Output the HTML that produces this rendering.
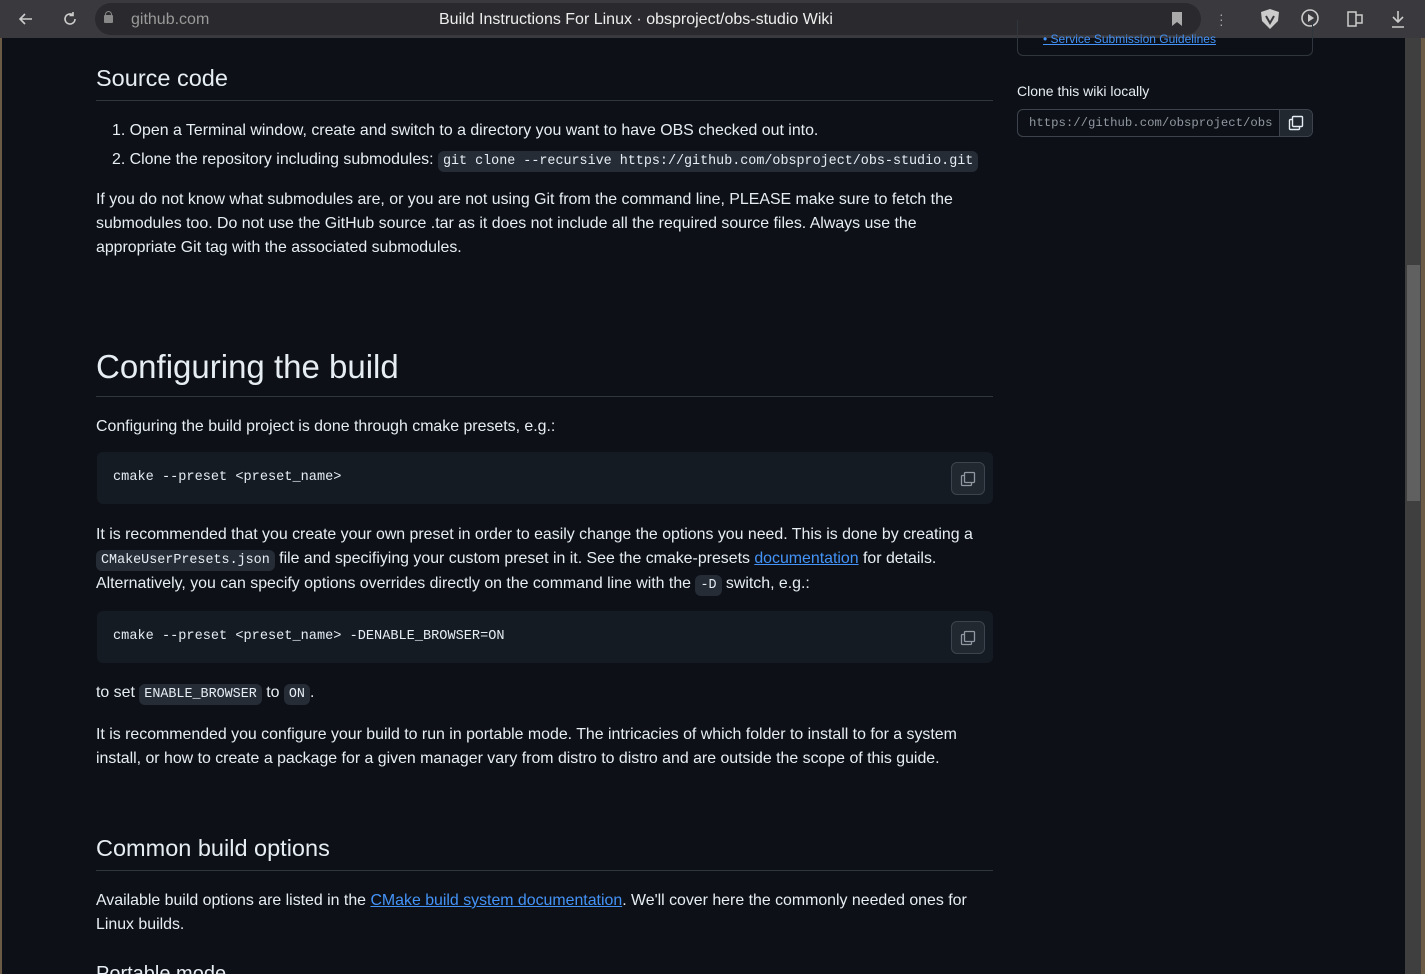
<!DOCTYPE html>
<html><head><meta charset="utf-8"><style>
*{margin:0;padding:0;box-sizing:border-box}
html,body{width:1425px;height:974px;overflow:hidden}
body{background:#0d1117;color:#e6edf3;font-family:"Liberation Sans",sans-serif;position:relative}
.t{position:absolute;left:96px;font-size:15.9px;line-height:24px;white-space:nowrap}
code{font-family:"Liberation Mono",monospace;font-size:13.4px;background:#262c36;padding:3px 5px;border-radius:6px}
a{color:#4493f8;text-decoration:underline}
.h{position:absolute;left:96px;width:897px;border-bottom:1px solid #30363d;font-weight:normal;white-space:nowrap}
.pre{position:absolute;left:97px;width:896px;height:52px;background:#151b23;border-radius:6px;font-family:"Liberation Mono",monospace;font-size:13.6px;line-height:52px;padding-left:16px;white-space:nowrap}
.cp{position:absolute;right:8px;top:10px;width:34px;height:33px;border:1px solid #3d444d;border-radius:6px;background:#212830}
.cp svg{position:absolute;left:8px;top:8px}
</style></head><body>
<div style="position:absolute;left:0;top:0;width:1425px;height:38px;background:#3a3a3e"></div>
<div style="position:absolute;left:95px;top:3px;width:1106px;height:32px;border-radius:16px;background:#2a2a2e"></div>
<svg style="position:absolute;left:17px;top:10px" width="18" height="18" viewBox="0 0 18 18"><path d="M15 9H3M8 4L3 9l5 5" stroke="#ccc" stroke-width="1.6" fill="none"/></svg>
<svg style="position:absolute;left:61px;top:10px" width="18" height="18" viewBox="0 0 18 18"><path d="M14 9a5 5 0 1 1-2-4M12 2v3.5H8.5" stroke="#ccc" stroke-width="1.6" fill="none"/></svg>
<div style="position:absolute;left:104px;top:15px;width:9px;height:8px;background:#888;border-radius:1px"></div>
<div style="position:absolute;left:105px;top:11px;width:7px;height:7px;border:1.5px solid #888;border-radius:4px 4px 0 0"></div>
<div style="position:absolute;left:131px;top:11px;font-size:16px;color:#9a9a9a">github.com</div>
<div style="position:absolute;left:439px;top:11px;font-size:16px;color:#eee">Build Instructions For Linux · obsproject/obs-studio Wiki</div>
<svg style="position:absolute;left:1171px;top:11px" width="12" height="16"><path d="M1 1h10v14l-5-4-5 4z" fill="#aaa"/></svg>
<div style="position:absolute;left:1219px;top:12px;color:#aaa;font-size:14px;line-height:5px">·<br>·<br>·</div>
<svg style="position:absolute;left:1259px;top:8px" width="22" height="22"><path d="M11 1l9 3-1 9-8 8-8-8-1-9z" fill="#ccc"/><path d="M7 8l4 7 4-7" stroke="#3a3a3e" stroke-width="2" fill="none"/></svg>
<svg style="position:absolute;left:1300px;top:8px" width="22" height="22"><circle cx="10" cy="10" r="8" stroke="#ccc" stroke-width="1.6" fill="none"/><path d="M8 6l6 4-6 4z" fill="#ccc"/></svg>
<svg style="position:absolute;left:1345px;top:9px" width="20" height="20"><path d="M3 3h8v14H3zM11 6h6v8h-6" stroke="#ccc" stroke-width="1.5" fill="none"/></svg>
<svg style="position:absolute;left:1389px;top:9px" width="18" height="20"><path d="M9 2v11M4 8l5 5 5-5M3 18h12" stroke="#ccc" stroke-width="1.6" fill="none"/></svg>
<div style="position:absolute;left:1405px;top:38px;width:16px;height:936px;background:#3f3f3f"></div>
<div style="position:absolute;left:1407px;top:265px;width:13px;height:236px;background:#606060"></div>
<div style="position:absolute;left:1421px;top:38px;width:4px;height:936px;background:#6b5a45"></div>
<div style="position:absolute;left:0;top:38px;width:2px;height:936px;background:#6b5a45"></div>
<div style="position:absolute;left:1017px;top:20px;width:296px;height:36px;border:1px solid #30363d;border-top:none;border-radius:0 0 6px 6px"></div>
<div style="position:absolute;left:1043px;top:32px;font-size:12px;color:#4493f8;text-decoration:underline">• Service Submission Guidelines</div>
<div style="position:absolute;left:1017px;top:83px;font-size:14px">Clone this wiki locally</div>
<div style="position:absolute;left:1017px;top:109px;width:296px;height:28px;border:1px solid #3d444d;border-radius:6px;background:#0d1117;overflow:hidden">
<div style="position:absolute;left:11px;top:6px;font-family:'Liberation Mono',monospace;font-size:12.3px;color:#9198a1">https://github.com/obsproject/obs</div>
<div style="position:absolute;right:0;top:0;width:33px;height:26px;background:#212830;border-left:1px solid #3d444d"><svg style="position:absolute;left:8px;top:5px" width="16" height="16" viewBox="0 0 16 16"><path d="M5.5 1.5h8a1 1 0 0 1 1 1v8a1 1 0 0 1-1 1h-8a1 1 0 0 1-1-1v-8a1 1 0 0 1 1-1zM4.5 4.5h-2a1 1 0 0 0-1 1v8a1 1 0 0 0 1 1h8a1 1 0 0 0 1-1v-2" stroke="#e6edf3" stroke-width="1.4" fill="none"/></svg></div></div>
<div class="h" style="top:65px;height:36px;font-size:23.5px">Source code</div>
<div class="t" style="top:119px;left:112px">1. Open a Terminal window, create and switch to a directory you want to have OBS checked out into.</div>
<div class="t" style="top:148px;left:112px">2. Clone the repository including submodules: <code>git clone --recursive https://github.com/obsproject/obs-studio.git</code></div>
<div class="t" style="top:188px">If you do not know what submodules are, or you are not using Git from the command line, PLEASE make sure to fetch the</div>
<div class="t" style="top:212px">submodules too. Do not use the GitHub source .tar as it does not include all the required source files. Always use the</div>
<div class="t" style="top:236px">appropriate Git tag with the associated submodules.</div>
<div class="h" style="top:348px;height:49px;font-size:33px">Configuring the build</div>
<div class="t" style="top:415px">Configuring the build project is done through cmake presets, e.g.:</div>
<div class="pre" style="top:452px">cmake --preset &lt;preset_name&gt;<div class="cp"><svg width="16" height="16" viewBox="0 0 16 16"><path d="M5.5 1.5h8a1 1 0 0 1 1 1v8a1 1 0 0 1-1 1h-8a1 1 0 0 1-1-1v-8a1 1 0 0 1 1-1zM4.5 4.5h-2a1 1 0 0 0-1 1v8a1 1 0 0 0 1 1h8a1 1 0 0 0 1-1v-2" stroke="#9198a1" stroke-width="1.3" fill="none"/></svg></div></div>
<div class="t" style="top:523px">It is recommended that you create your own preset in order to easily change the options you need. This is done by creating a</div>
<div class="t" style="top:547px"><code>CMakeUserPresets.json</code> file and specifiying your custom preset in it. See the cmake-presets <a>documentation</a> for details.</div>
<div class="t" style="top:572px">Alternatively, you can specify options overrides directly on the command line with the <code>-D</code> switch, e.g.:</div>
<div class="pre" style="top:611px">cmake --preset &lt;preset_name&gt; -DENABLE_BROWSER=ON<div class="cp"><svg width="16" height="16" viewBox="0 0 16 16"><path d="M5.5 1.5h8a1 1 0 0 1 1 1v8a1 1 0 0 1-1 1h-8a1 1 0 0 1-1-1v-8a1 1 0 0 1 1-1zM4.5 4.5h-2a1 1 0 0 0-1 1v8a1 1 0 0 0 1 1h8a1 1 0 0 0 1-1v-2" stroke="#9198a1" stroke-width="1.3" fill="none"/></svg></div></div>
<div class="t" style="top:681px">to set <code>ENABLE_BROWSER</code> to <code>ON</code>.</div>
<div class="t" style="top:723px">It is recommended you configure your build to run in portable mode. The intricacies of which folder to install to for a system</div>
<div class="t" style="top:747px">install, or how to create a package for a given manager vary from distro to distro and are outside the scope of this guide.</div>
<div class="h" style="top:835px;height:36px;font-size:23.5px">Common build options</div>
<div class="t" style="top:889px">Available build options are listed in the <a>CMake build system documentation</a>. We'll cover here the commonly needed ones for</div>
<div class="t" style="top:913px">Linux builds.</div>
<div class="t" style="top:962px;font-size:20px;line-height:24px">Portable mode</div>
</body></html>
